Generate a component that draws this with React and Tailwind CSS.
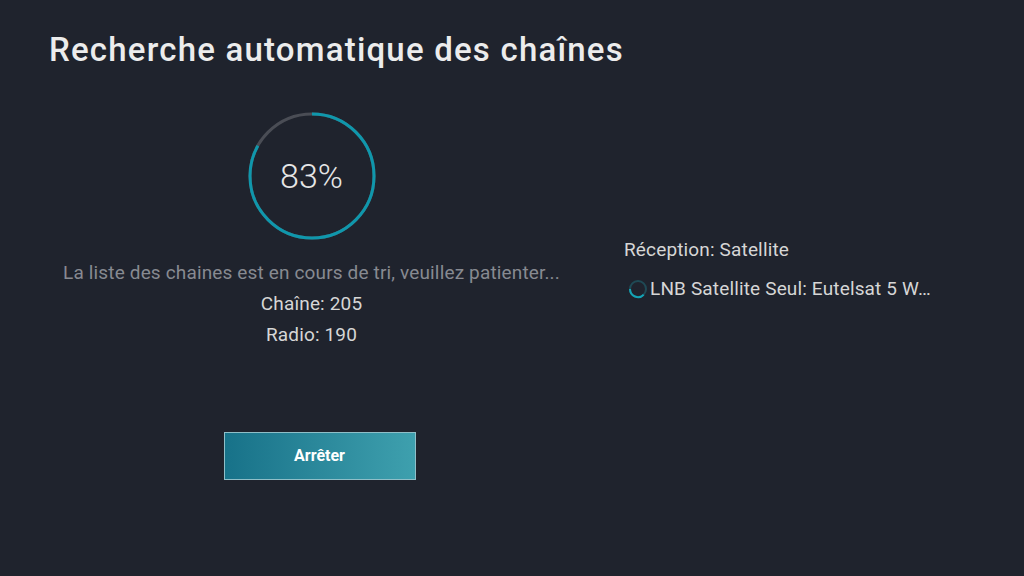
import React from "react";

function Ring({ pct }) {
  const r = 62;
  const c = 2 * Math.PI * r;
  const p = (pct / 100) * c;
  return (
    <svg width="130" height="130" viewBox="0 0 130 130" className="block">
      <circle cx="65" cy="65" r={r} fill="none" stroke="#4a4d55" strokeWidth="3" />
      <circle
        cx="65"
        cy="65"
        r={r}
        fill="none"
        stroke="#0f97ac"
        strokeWidth="3"
        strokeDasharray={`${p} ${c}`}
        transform="rotate(-90 65 65)"
      />
    </svg>
  );
}

export default function App() {
  return (
    <div
      className="w-[1024px] h-[576px] bg-[#1f232d] overflow-hidden text-[#d9d9d9]"
      style={{ fontFamily: "Roboto, 'Noto Sans', sans-serif" }}
    >
      <h1 className="pl-[49px] pt-[28px] text-[33px] leading-[44px] font-medium text-[#ececec] tracking-[1.2px]">
        Recherche automatique des chaînes
      </h1>
      <div className="flex pl-[49px] pt-[39px]">
        <div className="w-[525px] flex flex-col items-center">
          <div className="relative w-[130px] h-[130px]">
            <Ring pct={83} />
            <div className="absolute inset-0 flex items-center justify-center text-[34px] font-light text-[#e6e6e6]">
              83%
            </div>
          </div>
          <div className="mt-[16px] text-[19px] leading-[31px] tracking-[0.15px] text-[#878a91] whitespace-nowrap">
            La liste des chaines est en cours de tri, veuillez patienter...
          </div>
          <div className="text-[19px] leading-[31px] tracking-[0.15px] text-[#d6d6d6]">Chaîne: 205</div>
          <div className="text-[19px] leading-[31px] tracking-[0.15px] text-[#d6d6d6]">Radio: 190</div>
          <button className="mt-[82px] ml-[16px] w-[192px] h-[48px] border border-[#8fbfc8] bg-gradient-to-r from-[#177289] to-[#3ea0ae] text-white text-[16px] font-bold">
            Arrêter
          </button>
        </div>
        <div className="ml-[50px] pt-[125px] text-[19px] tracking-[0.15px] text-[#d6d6d6]">
          <div className="leading-[28px]">Réception: Satellite</div>
          <div className="mt-[11px] flex items-center leading-[28px]">
            <svg width="22" height="22" viewBox="0 0 22 22" className="ml-[3px]">
              <circle cx="11" cy="11" r="8" fill="none" stroke="#1f4a55" strokeWidth="2" />
              <path d="M3 11 A8 8 0 0 0 16.7 16.7" fill="none" stroke="#14a3b5" strokeWidth="2" />
            </svg>
            <span className="ml-[1px]">LNB Satellite Seul: Eutelsat 5 W…</span>
          </div>
        </div>
      </div>
    </div>
  );
}
